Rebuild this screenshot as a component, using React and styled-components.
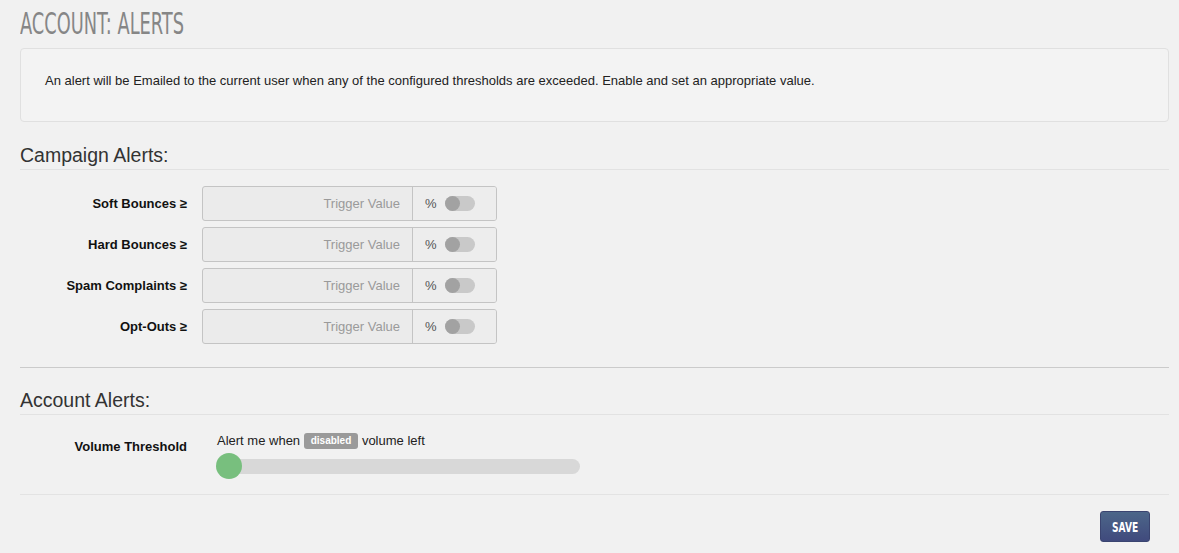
import styled, { createGlobalStyle } from 'styled-components';

const GlobalStyle = createGlobalStyle`
  html, body {
    margin: 0;
    padding: 0;
    background: #f1f1f1;
  }
  body {
    font-family: "Liberation Sans", Arial, sans-serif;
    font-size: 13px;
    color: #222;
  }
  * {
    box-sizing: border-box;
  }
`;

const Page = styled.div`
  padding: 6px 10px 0 20px;
`;

const Title = styled.h1`
  margin: 0;
  height: 36px;
  font-family: "Liberation Sans Narrow", "DejaVu Sans Condensed", sans-serif;
  font-weight: 400;
  font-size: 30px;
  line-height: 36px;
  color: #868686;

  span {
    display: inline-block;
    transform: scaleX(0.66);
    transform-origin: left center;
  }
`;

const InfoBox = styled.div`
  margin-top: 6px;
  border: 1px solid #e0e0e0;
  border-radius: 4px;
  background: #f3f3f3;
  padding: 23px 24px 31px;

  p {
    margin: 0;
    line-height: 18px;
    color: #222;
  }
`;

const Legend = styled.h3`
  margin: ${p => p.$top}px 0 0;
  font-size: 19.5px;
  line-height: 21px;
  font-weight: 400;
  color: #333;
  padding-bottom: 3px;
  border-bottom: 1px solid #e2e2e2;
`;

const Fields = styled.div`
  margin-top: 16px;
  display: grid;
  grid-template-columns: 182px 295px;
  row-gap: 6px;
  align-items: center;
`;

const Label = styled.label`
  text-align: right;
  padding-right: 15px;
  font-weight: 700;
  font-size: 13px;
  line-height: 18px;
  color: #111;
  align-self: ${p => (p.$top ? 'start' : 'center')};
  margin-top: ${p => (p.$top ? '6px' : '0')};
`;

const InputGroup = styled.div`
  display: flex;
  height: 35px;
  border: 1px solid #c4c4c4;
  border-radius: 3px;
  overflow: hidden;
  background: #ebebeb;
`;

const TriggerInput = styled.input`
  flex: 0 0 209px;
  border: none;
  background: transparent;
  text-align: right;
  padding: 0 12px;
  font-family: "Liberation Sans", Arial, sans-serif;
  font-size: 13px;
  outline: none;

  &::placeholder {
    color: #9a9a9a;
  }
`;

const Addon = styled.div`
  flex: 1;
  display: flex;
  align-items: center;
  gap: 8px;
  padding-left: 12px;
  border-left: 1px solid #c4c4c4;
  background: #ededed;
  color: #555;
  font-size: 13px;
`;

const Toggle = styled.span`
  position: relative;
  width: 30px;
  height: 15px;
  border-radius: 8px;
  background: #c9c9c9;

  &::before {
    content: '';
    position: absolute;
    left: 0;
    top: 0;
    width: 15px;
    height: 15px;
    border-radius: 50%;
    background: #a2a2a2;
  }
`;

const Divider = styled.div`
  margin-top: ${p => p.$top}px;
  border-top: 1px solid ${p => (p.$strong ? '#cbcbcb' : '#e3e3e3')};
`;

const VolumeRow = styled.div`
  padding-top: 17px;
  display: grid;
  grid-template-columns: 182px 1fr;
`;

const VolumeBody = styled.div`
  padding-left: 15px;
`;

const VolumeText = styled.div`
  line-height: 18px;
  color: #222;
`;

const Badge = styled.span`
  display: inline-block;
  background: #9a9a9a;
  color: #fff;
  font-size: 10px;
  font-weight: 700;
  line-height: 16px;
  padding: 0 7px;
  border-radius: 3px;
  vertical-align: 1px;
`;

const Slider = styled.div`
  position: relative;
  margin-top: 3px;
  width: 363px;
  height: 26px;
  display: flex;
  align-items: center;
`;

const Track = styled.div`
  width: 100%;
  height: 15px;
  border-radius: 8px;
  background: #d8d8d8;
`;

const Knob = styled.span`
  position: absolute;
  left: -1px;
  top: 0;
  width: 26px;
  height: 26px;
  border-radius: 50%;
  background: #78bf7e;
`;

const Footer = styled.div`
  margin-top: 16px;
  display: flex;
  justify-content: flex-end;
  padding-right: 19px;
`;

const SaveButton = styled.button`
  width: 50px;
  height: 31px;
  border: 1px solid #3a4470;
  border-radius: 3px;
  background: linear-gradient(#4c6689, #404a7d);
  color: #fff;
  font-family: "Liberation Sans Narrow", "DejaVu Sans Condensed", sans-serif;
  font-weight: 700;
  font-size: 14px;
  padding: 0;
  cursor: pointer;

  span {
    display: inline-block;
    transform: scaleX(0.72);
  }
`;

const campaignAlerts = ['Soft Bounces', 'Hard Bounces', 'Spam Complaints', 'Opt-Outs'];

export default function App() {
  return (
    <>
      <GlobalStyle />
      <Page>
        <Title>
          <span>ACCOUNT: ALERTS</span>
        </Title>
        <InfoBox>
          <p>
            An alert will be Emailed to the current user when any of the configured thresholds are exceeded. Enable and
            set an appropriate value.
          </p>
        </InfoBox>

        <Legend $top={23}>Campaign Alerts:</Legend>
        <Fields>
          {campaignAlerts.map(name => [
            <Label key={name + '-l'}>{name} ≥</Label>,
            <InputGroup key={name + '-g'}>
              <TriggerInput placeholder="Trigger Value" />
              <Addon>
                %
                <Toggle />
              </Addon>
            </InputGroup>,
          ])}
        </Fields>

        <Divider $top={23} $strong />

        <Legend $top={22}>Account Alerts:</Legend>
        <VolumeRow>
          <Label $top>Volume Threshold</Label>
          <VolumeBody>
            <VolumeText>
              Alert me when <Badge>disabled</Badge> volume left
            </VolumeText>
            <Slider>
              <Track />
              <Knob />
            </Slider>
          </VolumeBody>
        </VolumeRow>

        <Divider $top={15} />

        <Footer>
          <SaveButton>
            <span>SAVE</span>
          </SaveButton>
        </Footer>
      </Page>
    </>
  );
}
